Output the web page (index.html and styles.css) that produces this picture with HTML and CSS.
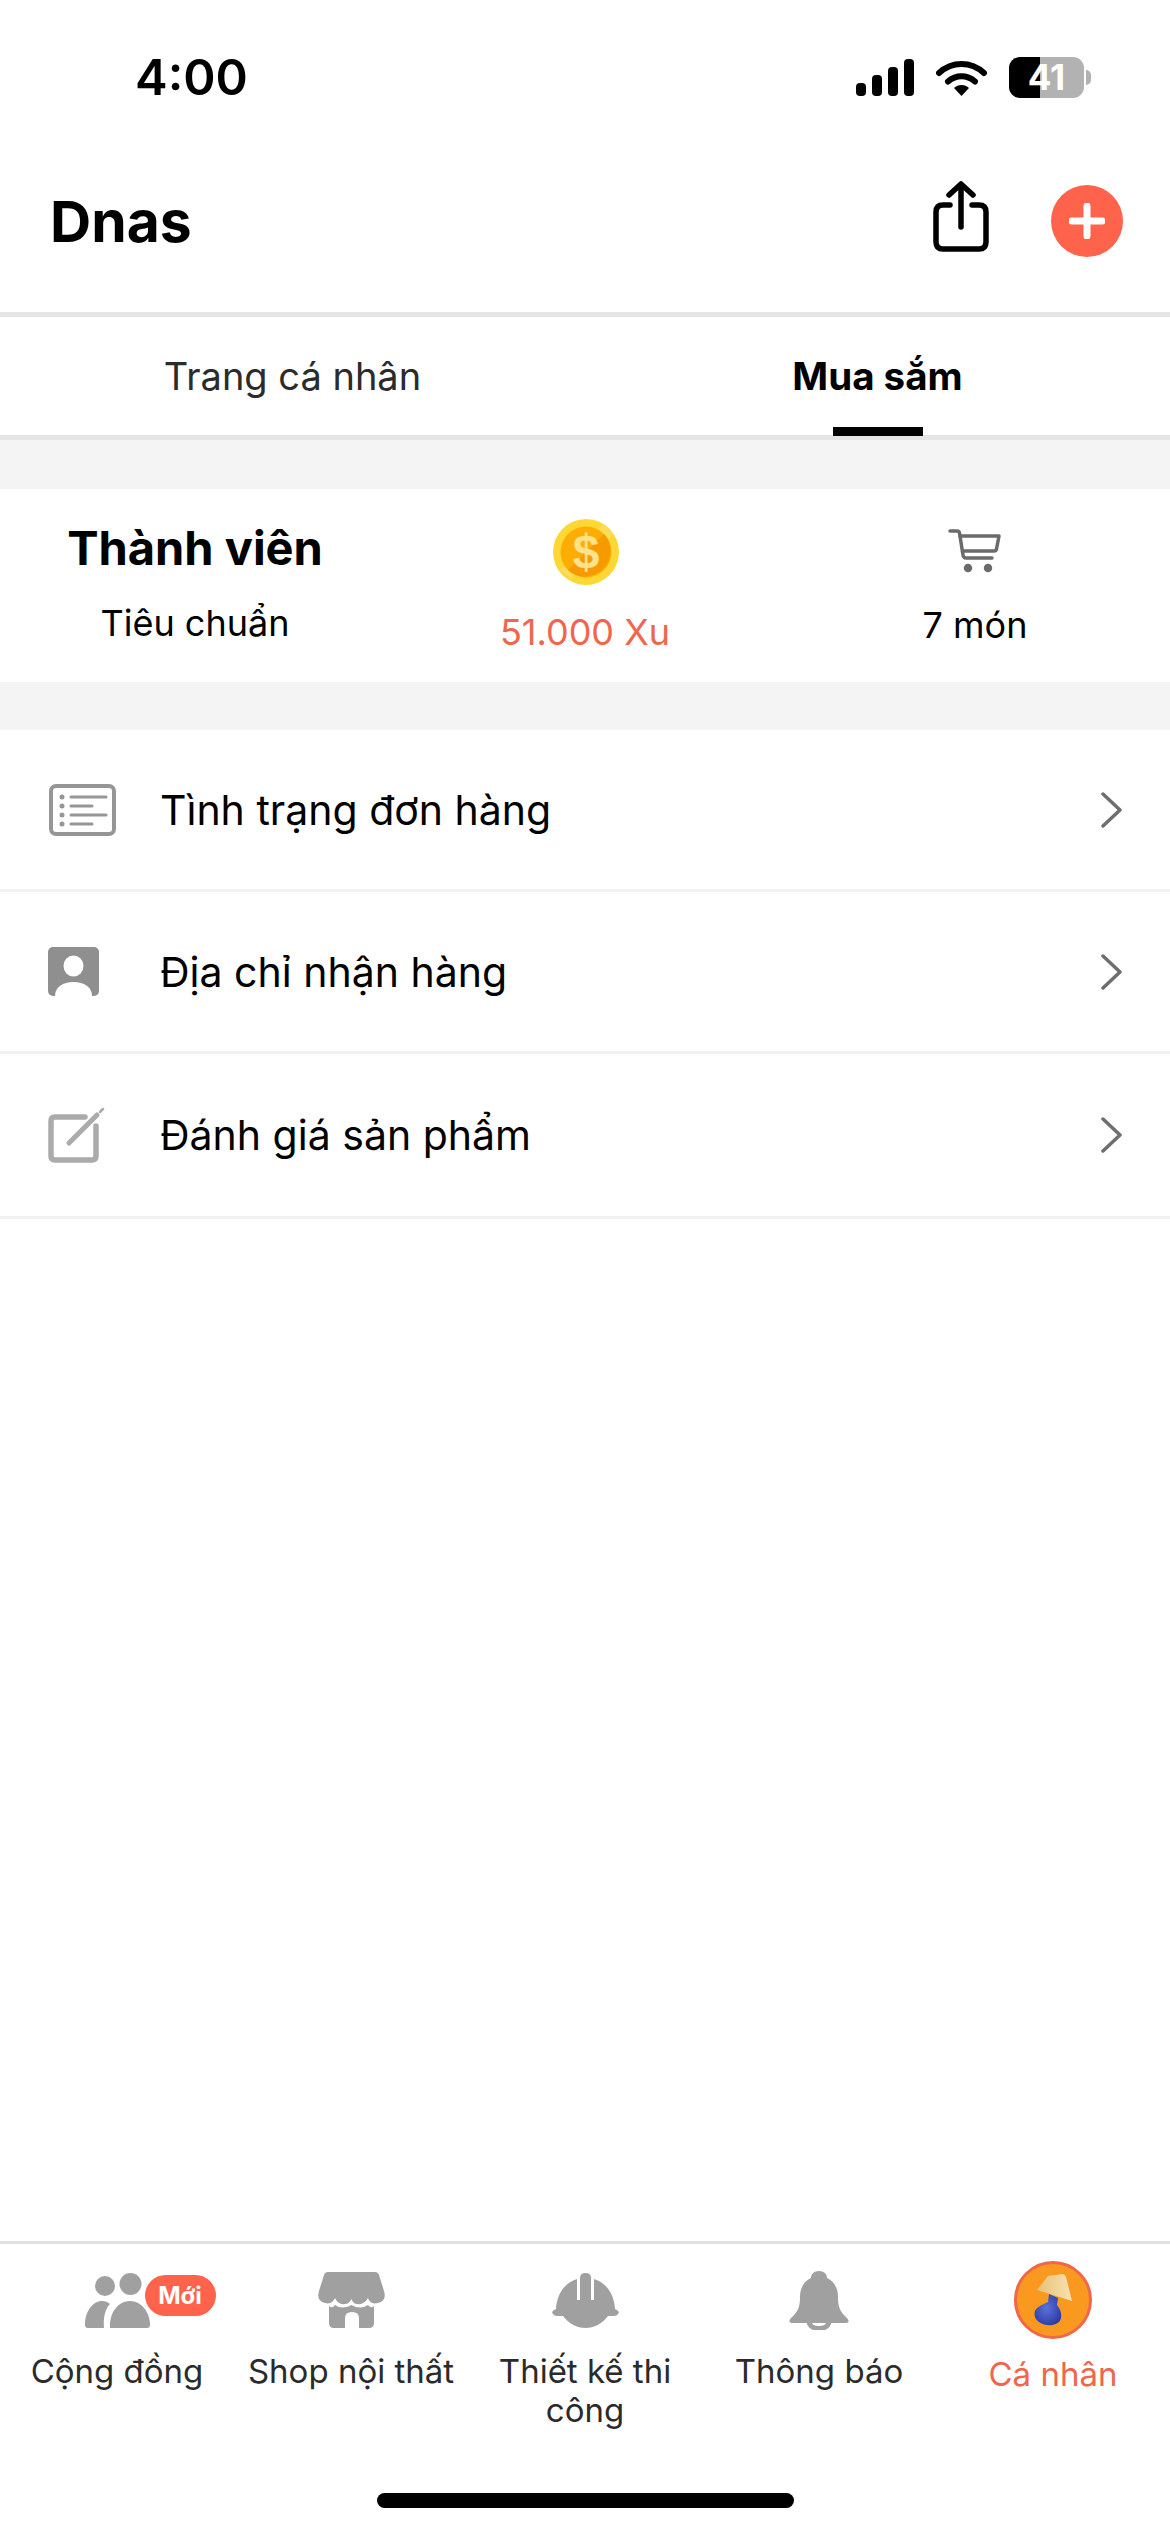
FILE: index.html
```html
<!DOCTYPE html>
<html lang="vi">
<head>
    <meta charset="UTF-8">
    <meta name="viewport" content="width=device-width, initial-scale=1.0">
    <title>Dnas</title>
    <link rel="stylesheet" href="styles.css">
</head>
<body>
    <div class="app">
        <div class="status-bar">
            <span class="status-time">4:00</span>
            <div class="status-icons">
                <svg width="58" height="37" viewBox="0 0 58 37" fill="#000">
                    <rect x="0" y="24" width="10" height="13" rx="4"/>
                    <rect x="16" y="16" width="10" height="21" rx="4"/>
                    <rect x="32" y="8" width="10" height="29" rx="4"/>
                    <rect x="48" y="0" width="10" height="37" rx="4"/>
                </svg>
                <svg width="51" height="37" viewBox="0 0 51 37">
                    <path d="M3 14 C16 2 35 2 48 14" fill="none" stroke="#000" stroke-width="6" stroke-linecap="round"/>
                    <path d="M12 22.500 C20 15.500 31 15.500 39 22.500" fill="none" stroke="#000" stroke-width="6" stroke-linecap="round"/>
                    <path d="M18 29 C22 25 29 25 33 29 L25.500 37 Z" fill="#000"/>
                </svg>
                <div class="battery"><span>41</span></div>
            </div>
        </div>

        <header class="header">
            <h1 class="title">Dnas</h1>
            <div class="header-actions">
                <svg class="share-icon" width="56" height="80" viewBox="0 0 56 80" fill="none" stroke="#000" stroke-width="5.500" stroke-linecap="round" stroke-linejoin="round">
                    <path d="M17 24 H10 Q3 24 3 31 V61 Q3 68 10 68 H46 Q53 68 53 61 V31 Q53 24 46 24 H39"/>
                    <path d="M28 46 V4"/>
                    <path d="M16 14 L28 3 L40 14"/>
                </svg>
                <button class="add-button">
                    <svg width="36" height="36" viewBox="0 0 36 36" stroke="#fff" stroke-width="7" stroke-linecap="round">
                        <path d="M18 3 V33 M3 18 H33"/>
                    </svg>
                </button>
            </div>
        </header>

        <nav class="tabs">
            <div class="tab">Trang cá nhân</div>
            <div class="tab active">Mua sắm</div>
        </nav>

        <div class="spacer spacer-top"></div>

        <section class="stats">
            <div class="stat">
                <div class="stat-title">Thành viên</div>
                <div class="stat-text stat-member">Tiêu chuẩn</div>
            </div>
            <div class="stat">
                <svg class="coin-icon" width="66" height="66" viewBox="0 0 66 66">
                    <circle cx="33" cy="33" r="33" fill="#fdd835"/>
                    <path d="M50 5 L60 15 L18 60 L7 51 Z" fill="#fee27a" opacity="0.5"/>
                    <circle cx="33" cy="33" r="25.500" fill="#ffad00"/>
                    <path d="M15 51 A25.500 25.500 0 0 0 51 15 Z" fill="#f79a00"/>
                    <text x="33" y="49" text-anchor="middle" class="coin-sign">$</text>
                </svg>
                <div class="stat-text stat-coins">51.000 Xu</div>
            </div>
            <div class="stat">
                <svg class="cart-icon" width="54" height="44" viewBox="0 0 54 44" fill="none" stroke="#6b6b6b" stroke-width="3.500" stroke-linecap="round" stroke-linejoin="round">
                    <path d="M2 2 H9 Q11 2 11.500 4 L15 26 Q15.500 29 18 29 H44"/>
                    <path d="M12 7 H51 L48.500 20 Q48 22 46 22 H14.500"/>
                    <circle cx="20" cy="39" r="2.500" fill="#6b6b6b"/>
                    <circle cx="40" cy="39" r="2.500" fill="#6b6b6b"/>
                </svg>
                <div class="stat-text stat-cart">7 món</div>
            </div>
        </section>

        <div class="spacer spacer-mid"></div>

        <main class="menu">
            <div class="menu-row">
                <div class="menu-icon">
                    <svg width="69" height="52" viewBox="0 0 69 52" fill="none" stroke="#969696" stroke-linecap="round">
                        <rect x="3" y="2" width="63" height="48" rx="5" stroke-width="4"/>
                        <path d="M23 13 H58 M23 22 H44 M23 31 H58 M23 40 H44" stroke-width="3"/>
                        <path d="M14 13 V13 M14 22 V22 M14 31 V31 M14 40 V40" stroke-width="5"/>
                    </svg>
                </div>
                <span class="menu-label">Tình trạng đơn hàng</span>
                <svg class="chevron" width="22" height="36" viewBox="0 0 22 36" fill="none" stroke="#6e6e6e" stroke-width="3.500" stroke-linecap="round" stroke-linejoin="round">
                    <path d="M3 2 L20 18 L3 34"/>
                </svg>
            </div>
            <div class="menu-row">
                <div class="menu-icon">
                    <svg width="51" height="49" viewBox="0 0 51 49">
                        <rect width="51" height="49" rx="5" fill="#8f8f8f"/>
                        <ellipse cx="25.500" cy="19" rx="10" ry="10.500" fill="#fff"/>
                        <path d="M7 49 C7 40 15 35 25.500 35 C36 35 44 40 44 49 Z" fill="#fff"/>
                    </svg>
                </div>
                <span class="menu-label">Địa chỉ nhận hàng</span>
                <svg class="chevron" width="22" height="36" viewBox="0 0 22 36" fill="none" stroke="#6e6e6e" stroke-width="3.500" stroke-linecap="round" stroke-linejoin="round">
                    <path d="M3 2 L20 18 L3 34"/>
                </svg>
            </div>
            <div class="menu-row">
                <div class="menu-icon">
                    <svg width="57" height="56" viewBox="0 0 57 56" fill="none" stroke="#ababab" stroke-linecap="round">
                        <path d="M37 10 H7 Q3 10 3 14 V49 Q3 53 7 53 H44 Q48 53 48 49 V19" stroke-width="5.500"/>
                        <path d="M21 36 L49 8" stroke-width="5"/>
                        <path d="M52 5 L55 2" stroke-width="2.500"/>
                    </svg>
                </div>
                <span class="menu-label">Đánh giá sản phẩm</span>
                <svg class="chevron" width="22" height="36" viewBox="0 0 22 36" fill="none" stroke="#6e6e6e" stroke-width="3.500" stroke-linecap="round" stroke-linejoin="round">
                    <path d="M3 2 L20 18 L3 34"/>
                </svg>
            </div>
        </main>

        <footer class="bottom-nav">
            <div class="nav-items">
                <div class="nav-item">
                    <div class="nav-icon">
                        <div class="people-icon">
                            <svg width="65" height="55" viewBox="0 0 65 55" fill="#a0a0a0">
                                <circle cx="20" cy="13" r="10"/>
                                <circle cx="45.500" cy="11" r="11"/>
                                <path d="M25 55 C24 40 33 28 45 28 C57 28 65 40 65 52 Q65 55 62 55 Z"/>
                                <path d="M0 52 C0 38 8 28 17 28 C20 28 23 29 25 31 C20 36 18 45 19 55 H3 Q0 55 0 52 Z"/>
                            </svg>
                            <span class="badge">Mới</span>
                        </div>
                    </div>
                    <span class="nav-label">Cộng đồng</span>
                </div>
                <div class="nav-item">
                    <div class="nav-icon">
                        <svg width="67" height="56" viewBox="0 0 67 56" fill="#a0a0a0">
                            <path d="M10 0 H57 Q60 0 61 3 L66 19 Q69 29 60 31 Q52 33 50 26 Q46 33 39.500 32 Q35 32 33.500 27 Q31 32 27 32 Q20 33 17 26 Q14 33 7 31 Q-2 29 1 19 L6 3 Q7 0 10 0 Z"/>
                            <path d="M11 34 Q14 37 17 33 Q24 38 33.500 33 Q42 38 50 33 Q53 37 56 34 V51 Q56 56 51 56 H41 V46 Q41 40 34 40 Q27 40 27 46 V56 H16 Q11 56 11 51 Z"/>
                        </svg>
                    </div>
                    <span class="nav-label">Shop nội thất</span>
                </div>
                <div class="nav-item">
                    <div class="nav-icon">
                        <svg width="67" height="55" viewBox="0 0 67 55" fill="#a0a0a0">
                            <path d="M28 27 V5 Q28 0 33.500 0 Q39 0 39 5 V27 Z"/>
                            <path d="M25 6 V27 H42 V6 C54 10 62 20 63 36 L65 37 Q68 39 66 41 Q65 43 62 43 H56 C50 51 42 55 33.500 55 C25 55 17 51 11 43 H5 Q2 43 1 41 Q-1 39 2 37 L4 36 C5 20 13 10 25 6 Z"/>
                        </svg>
                    </div>
                    <span class="nav-label">Thiết kế thi công</span>
                </div>
                <div class="nav-item">
                    <div class="nav-icon">
                        <svg width="60" height="59" viewBox="0 0 60 59" fill="#a0a0a0">
                            <path d="M30 0 C35 0 38 3 38 7 C45 10 49 17 49 26 C49 36 51 41 58 47 Q62 52 56 52 H4 Q-2 52 2 47 C9 41 11 36 11 26 C11 17 15 10 22 7 C22 3 25 0 30 0 Z"/>
                            <path d="M20 50 C20 60 40 60 40 50" fill="none" stroke="#a0a0a0" stroke-width="5"/>
                        </svg>
                    </div>
                    <span class="nav-label">Thông báo</span>
                </div>
                <div class="nav-item">
                    <div class="nav-icon">
                        <svg width="78" height="78" viewBox="0 0 78 78">
                            <defs>
                                <linearGradient id="shade" x1="0" y1="0" x2="1" y2="0">
                                    <stop offset="0" stop-color="#e8c078"/>
                                    <stop offset="1" stop-color="#f7e2b0"/>
                                </linearGradient>
                                <radialGradient id="vase" cx="0.450" cy="0.450" r="0.650">
                                    <stop offset="0" stop-color="#5a72dc"/>
                                    <stop offset="1" stop-color="#2a37a0"/>
                                </radialGradient>
                            </defs>
                            <circle cx="39" cy="39" r="37.500" fill="#f9991f" stroke="#f0674a" stroke-width="3"/>
                            <path d="M35 33 L44 37 L43 44 C46 48 48 52 47 57 C46 63 38 65 33 64 C25 63 20 58 20.500 52 C21 46 28 44 34 41 Z" fill="url(#vase)"/>
                            <path d="M34 15 L49 13 Q52 14 53 20 L58 40 L23 29 Z" fill="url(#shade)"/>
                        </svg>
                    </div>
                    <span class="nav-label active">Cá nhân</span>
                </div>
            </div>
            <div class="home-indicator"></div>
        </footer>
    </div>
</body>
</html>
```

FILE: styles.css
```css
* {
    box-sizing: border-box;
}

body {
    font-family: Inter, "Liberation Sans", sans-serif;
    margin: 0;
    padding: 0;
    background-color: #ffffff;
    color: #000000;
}

.app {
    display: flex;
    flex-direction: column;
    height: 100vh;
}

.status-bar {
    display: flex;
    justify-content: space-between;
    align-items: center;
    height: 130px;
    padding: 37px 79px 13px 135px;
    flex-shrink: 0;
}

.status-time {
    font-size: 49px;
    font-weight: 600;
    line-height: 1;
}

.status-icons {
    display: flex;
    align-items: center;
    gap: 22px;
}

.battery {
    position: relative;
    display: flex;
    align-items: center;
    justify-content: center;
    width: 75px;
    height: 41px;
    border-radius: 11px;
    background: linear-gradient(to right, #000000 41%, #b2b2b2 41%);
    color: #ffffff;
    font-size: 35px;
    font-weight: 700;
    margin-right: 7px;
}

.battery::after {
    content: '';
    position: absolute;
    right: -7px;
    top: 13px;
    width: 5px;
    height: 15px;
    border-radius: 0 5px 5px 0;
    background-color: #b2b2b2;
}

.header {
    display: flex;
    justify-content: space-between;
    align-items: center;
    height: 187px;
    padding: 0 47px 0 50px;
    border-bottom: 5px solid #e5e5e5;
    flex-shrink: 0;
}

.title {
    margin: 0;
    font-size: 57px;
    font-weight: 700;
}

.header-actions {
    display: flex;
    align-items: center;
    gap: 62px;
}

.add-button {
    display: flex;
    align-items: center;
    justify-content: center;
    width: 72px;
    height: 72px;
    padding: 0;
    border: none;
    border-radius: 50%;
    background-color: #ff634b;
}

.tabs {
    display: grid;
    grid-template-columns: 1fr 1fr;
    height: 123px;
    border-bottom: 5px solid #e5e5e5;
    flex-shrink: 0;
}

.tab {
    position: relative;
    display: flex;
    align-items: center;
    justify-content: center;
    padding-bottom: 1px;
    font-size: 38px;
    color: #2b2b2b;
}

.tab.active {
    font-size: 38.500px;
    font-weight: 700;
    color: #000000;
}

.tab.active::after {
    content: '';
    position: absolute;
    bottom: -1px;
    left: 248px;
    width: 90px;
    height: 9px;
    background-color: #000000;
}

.spacer {
    background-color: #f4f4f4;
    flex-shrink: 0;
}

.spacer-top {
    height: 49px;
}

.spacer-mid {
    height: 48px;
}

.stats {
    display: grid;
    grid-template-columns: repeat(3, 1fr);
    height: 193px;
    padding-top: 30px;
    flex-shrink: 0;
}

.stat {
    display: flex;
    flex-direction: column;
    align-items: center;
}

.stat-title {
    font-size: 47px;
    font-weight: 700;
    line-height: 58px;
}

.stat-text {
    font-size: 36px;
    line-height: 44px;
}

.stat-member {
    margin-top: 24px;
}

.stat-coins {
    margin-top: 25px;
    color: #f0664d;
}

.stat-cart {
    margin-top: 30px;
}

.coin-icon {
    margin-left: 2px;
}

.cart-icon {
    margin-top: 10px;
}

.coin-sign {
    font-family: "Liberation Sans", sans-serif;
    font-size: 48px;
    font-weight: 700;
    fill: #ffe28a;
}

.menu {
    flex: 1;
}

.menu-row {
    display: flex;
    align-items: center;
    height: 162px;
    padding: 0 48px;
    border-bottom: 3px solid #f2f2f2;
}

.menu-row:last-child {
    height: 165px;
}

.menu-icon {
    display: flex;
    width: 112px;
    flex-shrink: 0;
}

.menu-label {
    flex: 1;
    font-size: 41px;
}

.bottom-nav {
    display: flex;
    flex-direction: column;
    height: 291px;
    border-top: 3px solid #e0e0e0;
    flex-shrink: 0;
}

.nav-items {
    display: grid;
    grid-template-columns: repeat(5, 1fr);
    padding-top: 14px;
}

.nav-item {
    display: flex;
    flex-direction: column;
    align-items: center;
}

.nav-icon {
    display: flex;
    align-items: center;
    justify-content: center;
    height: 84px;
    margin-bottom: 10px;
}

.people-icon {
    position: relative;
    display: flex;
}

.badge {
    position: absolute;
    left: 60px;
    top: 2px;
    display: flex;
    align-items: center;
    justify-content: center;
    width: 71px;
    height: 41px;
    border-radius: 21px;
    background-color: #ff634b;
    color: #ffffff;
    font-size: 24px;
    font-weight: 700;
}

.nav-label {
    font-size: 33px;
    line-height: 39px;
    text-align: center;
    color: #2b2b2b;
}

.nav-label.active {
    margin-top: 3px;
    color: #f0664d;
}

.home-indicator {
    width: 417px;
    height: 15px;
    margin: auto auto 24px;
    border-radius: 8px;
    background-color: #000000;
}
```
